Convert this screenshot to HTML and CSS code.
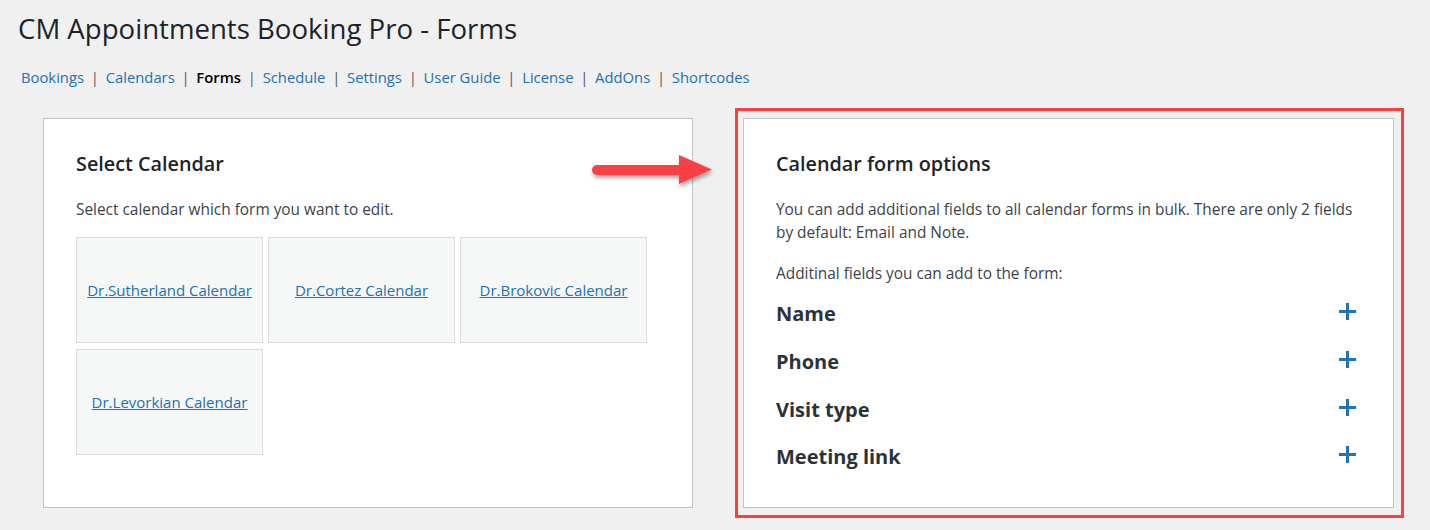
FILE: index.html
```html
<!DOCTYPE html>
<html>
<head>
<meta charset="utf-8">
<link rel="stylesheet" href="styles.css">
</head>
<body>
<div class="page">
  <h1 class="title">CM Appointments Booking Pro - Forms</h1>
  <ul class="subnav">
    <li><a href="#">Bookings</a><span class="sep">|</span></li>
    <li><a href="#">Calendars</a><span class="sep">|</span></li>
    <li><a href="#" class="current">Forms</a><span class="sep">|</span></li>
    <li><a href="#">Schedule</a><span class="sep">|</span></li>
    <li><a href="#">Settings</a><span class="sep">|</span></li>
    <li><a href="#">User Guide</a><span class="sep">|</span></li>
    <li><a href="#">License</a><span class="sep">|</span></li>
    <li><a href="#">AddOns</a><span class="sep">|</span></li>
    <li><a href="#">Shortcodes</a></li>
  </ul>

  <div class="panels">
    <section class="panel panel-left">
      <h2 class="panel-title">Select Calendar</h2>
      <p class="panel-text">Select calendar which form you want to edit.</p>
      <div class="tiles">
        <div class="tile"><a href="#">Dr.Sutherland Calendar</a></div>
        <div class="tile"><a href="#">Dr.Cortez Calendar</a></div>
        <div class="tile"><a href="#">Dr.Brokovic Calendar</a></div>
        <div class="tile"><a href="#">Dr.Levorkian Calendar</a></div>
      </div>
    </section>

    <div class="highlight">
      <section class="panel panel-right">
        <h2 class="panel-title">Calendar form options</h2>
        <p class="panel-text">You can add additional fields to all calendar forms in bulk. There are only 2 fields by default: Email and Note.</p>
        <p class="panel-text panel-text-2">Additinal fields you can add to the form:</p>
        <ul class="fields">
          <li class="field"><span class="field-name">Name</span><span class="plus"></span></li>
          <li class="field"><span class="field-name">Phone</span><span class="plus"></span></li>
          <li class="field"><span class="field-name">Visit type</span><span class="plus"></span></li>
          <li class="field"><span class="field-name">Meeting link</span><span class="plus"></span></li>
        </ul>
      </section>
    </div>
  </div>

  <svg class="arrow" width="140" height="50" viewBox="0 0 140 50">
    <defs>
      <filter id="sh" x="-20%" y="-40%" width="140%" height="180%">
        <feDropShadow dx="1" dy="3" stdDeviation="2" flood-color="#000" flood-opacity="0.35"/>
      </filter>
    </defs>
    <g filter="url(#sh)" fill="#f94144">
      <line x1="9" y1="20" x2="95" y2="20" stroke="#f94144" stroke-width="10" stroke-linecap="round"/>
      <polygon points="91,5 124,19.5 91,34"/>
    </g>
  </svg>
</div>
</body>
</html>
```

FILE: styles.css
```css
* { box-sizing: border-box; }

body {
  margin: 0;
  background: #f0f0f1;
  font-family: "Open Sans", "Noto Sans", sans-serif;
  color: #1d2327;
}

.page {
  position: relative;
  width: 1430px;
  height: 530px;
  padding-left: 18px;
}

.title {
  margin: 0;
  padding-top: 12px;
  font-size: 27.6px;
  line-height: 32px;
  font-weight: 400;
  color: #1d2327;
}

.subnav {
  list-style: none;
  margin: 23px 0 0 3px;
  padding: 0;
  display: flex;
  font-size: 14.8px;
  line-height: 20px;
  color: #50575e;
}

.subnav a {
  color: #2271b1;
  text-decoration: none;
}

.subnav a.current {
  color: #000;
  font-weight: 600;
}

.sep {
  display: inline-block;
  margin: 0 6.75px;
  color: #50575e;
}

.panels {
  display: flex;
  align-items: flex-start;
  margin-top: 21px;
}

.panel {
  background: #fff;
  border: 1px solid #c3c4c7;
  height: 390px;
  padding: 32px 32px 0 32px;
}

.panel-left {
  width: 650px;
  margin: 10px 0 0 25px;
}

.highlight {
  margin-left: 42px;
  border: 3px solid #f94144;
  padding: 7px 7px 7px 5px;
}

.panel-right {
  width: 651px;
  padding-right: 32px;
}

.panel-title {
  margin: 0;
  font-size: 19.8px;
  line-height: 26px;
  font-weight: 600;
  color: #1d2327;
}

.panel-text {
  margin: 21px 0 0;
  font-size: 15.4px;
  line-height: 23px;
  color: #3c434a;
}

.panel-text-2 {
  margin-top: 18px;
}

.tiles {
  display: grid;
  grid-template-columns: repeat(3, 187px);
  grid-auto-rows: 106px;
  gap: 6px 5px;
  margin-top: 16px;
}

.tile {
  background: #f6f7f7;
  border: 1px solid #dcdcde;
  display: flex;
  align-items: center;
  justify-content: center;
  font-size: 15px;
}

.tile a {
  color: #2271b1;
  text-decoration: underline;
}

.fields {
  list-style: none;
  margin: 5px 0 0;
  padding: 0;
}

.field {
  height: 47.7px;
  display: flex;
  align-items: center;
  justify-content: space-between;
}

.field-name {
  font-size: 20px;
  font-weight: 700;
  color: #2c3338;
}

.plus {
  position: relative;
  width: 17px;
  height: 17px;
  margin-top: -4px;
  margin-right: 5px;
}

.plus::before,
.plus::after {
  content: "";
  position: absolute;
  background: #2271b1;
}

.plus::before {
  left: 0;
  right: 0;
  top: 7px;
  height: 3px;
}

.plus::after {
  top: 0;
  bottom: 0;
  left: 7px;
  width: 3px;
}

.arrow {
  position: absolute;
  left: 588px;
  top: 150px;
}
```
